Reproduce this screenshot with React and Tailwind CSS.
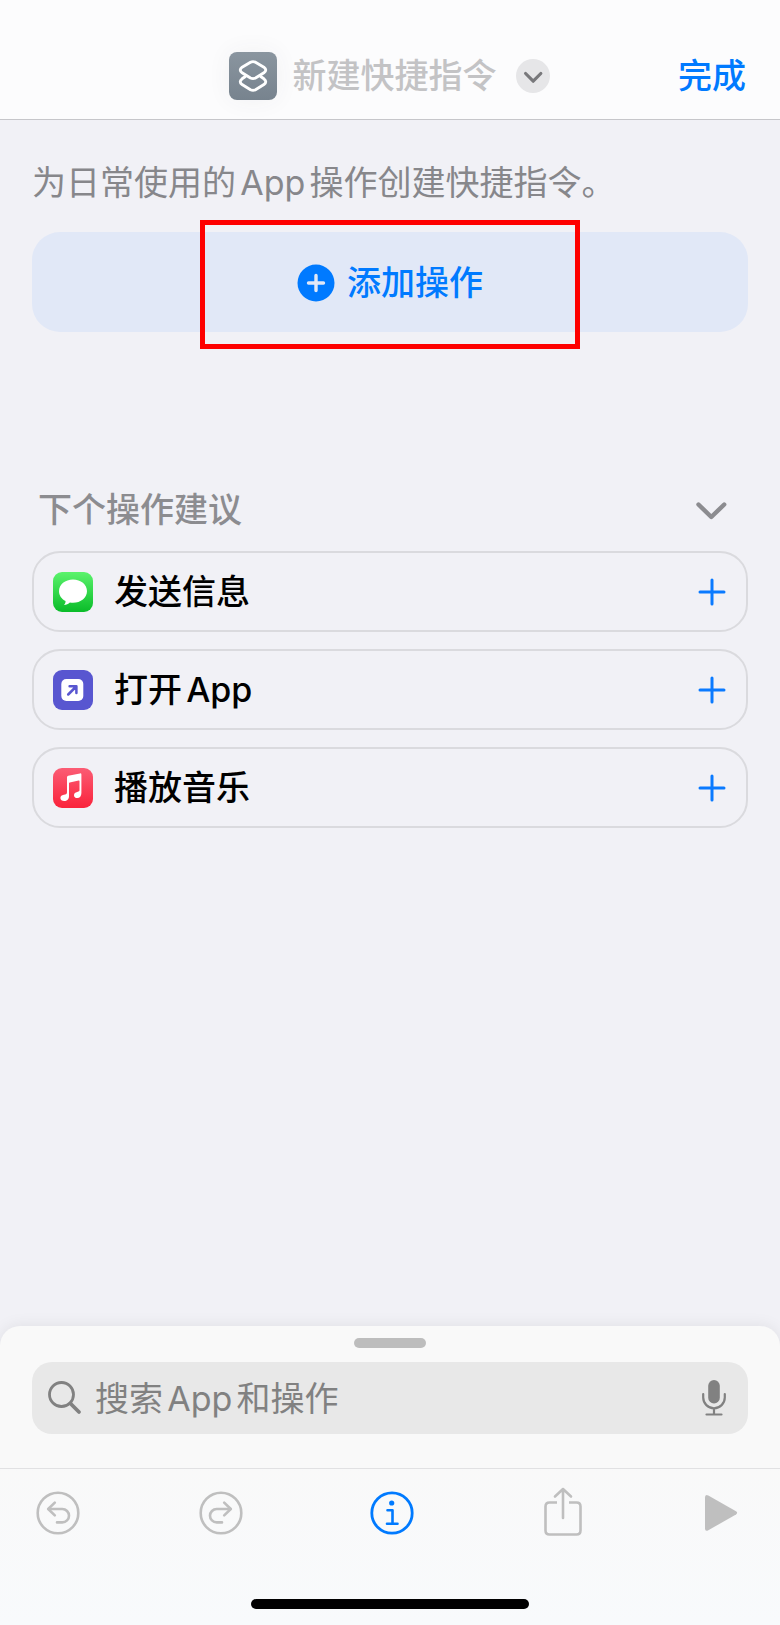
import React, { useState } from 'react';

function ShortcutsLogo() {
  return (
    <svg viewBox="0 0 48 48" className="w-12 h-12" fill="none" stroke="white" strokeWidth="2.900" strokeLinejoin="round" strokeLinecap="round">
      <path d="M21.500 10.300Q24 9 26.500 10.300L34.900 15.200Q38.600 18 34.900 20.800L26.500 26Q24 27.300 21.500 26L13.100 20.800Q9.400 18 13.100 15.200Z" />
      <path d="M16 24.800L13.100 26.800Q9.400 29.800 13.100 32.600L21.500 37.700Q24 39 26.500 37.700L34.900 32.600Q38.600 29.800 34.900 26.800L32 24.800" />
    </svg>
  );
}

function MessagesIcon() {
  return (
    <svg viewBox="0 0 40 40" className="w-10 h-10">
      <defs>
        <linearGradient id="messages" x1="0" y1="0" x2="0" y2="1">
          <stop offset="0" stopColor="#5bf36c" />
          <stop offset="1" stopColor="#0abc29" />
        </linearGradient>
      </defs>
      <rect width="40" height="40" rx="9" fill="url(#messages)" />
      <path fill="white" d="M20 7.600C12.200 7.600 6 12.600 6 19.200C6 23.300 8.500 26.900 12.500 29C12.700 30.200 12.200 31.600 11 32.900C13.300 32.800 15.400 31.900 16.900 30.500C17.900 30.700 19 30.800 20 30.800C27.800 30.800 34 25.600 34 19.200C34 12.600 27.800 7.600 20 7.600Z" />
    </svg>
  );
}

function OpenAppIcon() {
  return (
    <svg viewBox="0 0 40 40" className="w-10 h-10">
      <rect width="40" height="40" rx="9" fill="#5856d0" />
      <rect x="8.300" y="9" width="22" height="22" rx="5" fill="white" />
      <path d="M15.200 24.500L23.200 16.500M16.600 16.200H23.400V23" fill="none" stroke="#5856d0" strokeWidth="2.500" strokeLinecap="round" strokeLinejoin="round" />
    </svg>
  );
}

function MusicIcon() {
  return (
    <svg viewBox="0 0 40 40" className="w-10 h-10">
      <defs>
        <linearGradient id="music" x1="0" y1="0" x2="0" y2="1">
          <stop offset="0" stopColor="#fb5c74" />
          <stop offset="1" stopColor="#fa233b" />
        </linearGradient>
      </defs>
      <rect width="40" height="40" rx="9" fill="url(#music)" />
      <path fill="white" d="M14 9.200Q14.100 8.100 15.200 7.800L27 5.400Q28.400 5.200 28.400 6.500V25C28.400 28 26.800 30.100 24.300 30.100C22.300 30.100 21 28.900 21 27.200C21 25.300 22.300 24.300 24.200 23.900C26 23.500 26.500 23.300 26.500 22V13.200Q26.500 12.400 25.700 12.600L16.700 14.400Q16 14.600 16 15.300V28.200C16 31 14 33.100 11.300 33.100C9 33.100 7.400 31.800 7.400 30C7.400 28.200 8.700 27.200 10.800 26.800C13.200 26.300 14 26 14 24.300Z" />
    </svg>
  );
}

function UndoIcon() {
  return (
    <svg viewBox="0 0 44 44" className="w-11 h-11" fill="none" stroke="currentColor" strokeWidth="2.600" strokeLinecap="round" strokeLinejoin="round">
      <circle cx="22" cy="22" r="20.300" />
      <path d="M18.800 11.600L12.200 18L18.800 24.400" />
      <path d="M12.600 18H26.300A6.700 6.700 0 0 1 26.300 31.400H21" />
    </svg>
  );
}

const SUGGESTIONS = [
  { title: '发送信息', icon: MessagesIcon },
  { title: '打开App', icon: OpenAppIcon },
  { title: '播放音乐', icon: MusicIcon },
];

function App() {
  const [open, setOpen] = useState(true);
  const [query, setQuery] = useState('');

  return (
    <div className="min-h-screen flex flex-col bg-[#f1f1f6] font-['Inter','Noto_Sans_CJK_SC',sans-serif] text-[34px] leading-[48px] [text-autospace:normal]">

      {/* Navigation bar */}
      <header className="grid grid-cols-[1fr_auto_1fr] items-center pl-8 pr-[34px] pt-[52px] pb-[19px] bg-[#fcfcfd] border-b border-[#c6c6ca]">
        <span />
        <div className="flex items-center">
          <span className="rounded-lg bg-linear-to-b from-[#8a959f] to-[#77838e] shadow-[0_0_24px_rgba(60,60,80,0.06)]">
            <ShortcutsLogo />
          </span>
          <h1 className="ml-4 font-medium text-[#c3c3c5]">新建快捷指令</h1>
          <button type="button" aria-label="更多" className="ml-[19px] w-[34px] h-[34px] rounded-full bg-[#e6e6e8]">
            <svg viewBox="0 0 34 34" fill="none" stroke="#78787b" strokeWidth="3.200" strokeLinecap="round" strokeLinejoin="round">
              <path d="M9.600 14.500L17.200 22.200L24.800 14.500" />
            </svg>
          </button>
        </div>
        <button type="button" className="justify-self-end font-medium text-[#007aff]">完成</button>
      </header>

      <main className="flex-1 px-8 pt-[39px]">
        <p className="text-[#87878b]">为日常使用的App操作创建快捷指令。</p>

        {/* Add action, with the highlight frame over it */}
        <div className="relative mt-[25px]">
          <button type="button" className="w-full h-[100px] flex items-center justify-center gap-3 rounded-[28px] bg-[#e1e8f7] text-[#007aff] font-medium pt-px">
            <svg viewBox="0 0 38 38" className="w-[38px] h-[38px]">
              <circle cx="19" cy="19" r="18.500" fill="#007aff" />
              <path d="M19 11.500V26.500M11.500 19H26.500" stroke="#e1e8f7" strokeWidth="3.400" strokeLinecap="round" />
            </svg>
            添加操作
          </button>
          <div className="absolute -top-3 -bottom-[17px] left-1/2 w-[380px] -translate-x-1/2 border-[5px] border-[#fe0000] pointer-events-none" />
        </div>

        {/* Suggestions */}
        <section className="mt-[154px]">
          <div className="flex items-center justify-between pl-[6px] pr-5">
            <h2 className="font-medium text-[#8c8c90]">下个操作建议</h2>
            <button type="button" aria-label="收起建议" onClick={() => setOpen(!open)}>
              <svg viewBox="0 0 34 34" className="w-[34px] h-[34px]" fill="none" stroke="#8c8c90" strokeWidth="4.400" strokeLinecap="round" strokeLinejoin="round">
                <path d="M4.500 11.500L17.300 24L30.200 11.500" />
              </svg>
            </button>
          </div>

          {open && (
            <ul className="mt-[17px] flex flex-col gap-[17px]">
              {SUGGESTIONS.map(({ title, icon: Icon }) => (
                <li key={title}>
                  <button type="button" className="w-full h-[81px] flex items-center pl-[19px] pr-5 rounded-[28px] border-2 border-[#dadade] text-left">
                    <Icon />
                    <span className="ml-[21px] flex-1 font-medium text-black">{title}</span>
                    <svg viewBox="0 0 28 28" className="w-7 h-7" stroke="#0a7aff" strokeWidth="3" strokeLinecap="round">
                      <path d="M14 2V26M2 14H26" />
                    </svg>
                  </button>
                </li>
              ))}
            </ul>
          )}
        </section>
      </main>

      {/* Search sheet and toolbar */}
      <footer className="rounded-t-[20px] bg-[#f9f9f9] shadow-[0_0_16px_rgba(0,0,0,0.08)]">
        <div className="px-8 pt-3 pb-[34px]">
          <div className="mx-auto w-[72px] h-[10px] rounded-full bg-[#bdbdbd]" />
          <label className="mt-[14px] h-[72px] flex items-center px-4 rounded-[20px] bg-[#e8e8e8] text-[#818181]">
            <svg viewBox="0 0 34 34" className="w-[34px] h-[34px]" fill="none" stroke="currentColor" strokeLinecap="round">
              <circle cx="13.500" cy="13.500" r="12" strokeWidth="2.800" />
              <path d="M22.500 22.500L31 31" strokeWidth="3.800" />
            </svg>
            <input
              type="text"
              aria-label="搜索App和操作"
              placeholder="搜索App和操作"
              value={query}
              onChange={(e) => setQuery(e.target.value)}
              className="ml-[13px] pt-px flex-1 min-w-0 bg-transparent outline-none placeholder:text-[#818181]"
            />
            <svg viewBox="0 0 36 36" className="w-9 h-9" fill="none" stroke="currentColor" strokeWidth="2.200" strokeLinecap="round">
              <rect x="12.200" y="0" width="11.600" height="23.500" rx="5.800" fill="currentColor" stroke="none" />
              <path d="M7.200 14V17.500A10.800 10.800 0 0 0 28.800 17.500V14M18 28.500V34M10.500 34.500H25.500" />
            </svg>
          </label>
        </div>

        <nav className="flex flex-col pt-[18px] pb-4 border-t border-[#e1e1e3] bg-linear-to-b from-[#f9f9f9] to-[#f8fafc] text-[#bfbfbf]">
          <div className="flex items-center justify-between pl-9 pr-[42px]">
            <button type="button" aria-label="撤销"><UndoIcon /></button>
            <button type="button" aria-label="重做" className="-scale-x-100"><UndoIcon /></button>
            <button type="button" aria-label="信息" className="px-2 text-[#007aff]">
              <svg viewBox="0 0 44 44" className="w-11 h-11" fill="none" stroke="currentColor" strokeWidth="2.800" strokeLinecap="round" strokeLinejoin="round">
                <circle cx="22" cy="22" r="20.200" />
                <circle cx="21.700" cy="12" r="2.600" fill="currentColor" stroke="none" />
                <path d="M17.500 19.300H22.500V32.500M17 32.700H27.500" strokeWidth="2.600" />
              </svg>
            </button>
            <button type="button" aria-label="共享">
              <svg viewBox="0 2 44 52" className="w-11 h-[52px]" fill="none" stroke="currentColor" strokeWidth="2.600" strokeLinecap="round" strokeLinejoin="round">
                <path d="M16 17.500H8.500Q4.500 17.500 4.500 21.500V45.500Q4.500 49.500 8.500 49.500H35.500Q39.500 49.500 39.500 45.500V21.500Q39.500 17.500 35.500 17.500H28" strokeLinecap="butt" />
                <path d="M22 33V4M14 11.500L22 4L30 11.500" />
              </svg>
            </button>
            <button type="button" aria-label="运行">
              <svg viewBox="0 0 34 40" className="w-[34px] h-10" fill="currentColor">
                <path d="M1 4.500Q1 0.800 4.300 2.500L32 18.200Q34.300 19.800 32 21.400L4.300 37.300Q1 39 1 35.300Z" />
              </svg>
            </button>
          </div>
          <div className="mt-[60px] mx-auto w-[278px] h-[10px] rounded-full bg-black" />
        </nav>
      </footer>
    </div>
  );
}

export default App;
